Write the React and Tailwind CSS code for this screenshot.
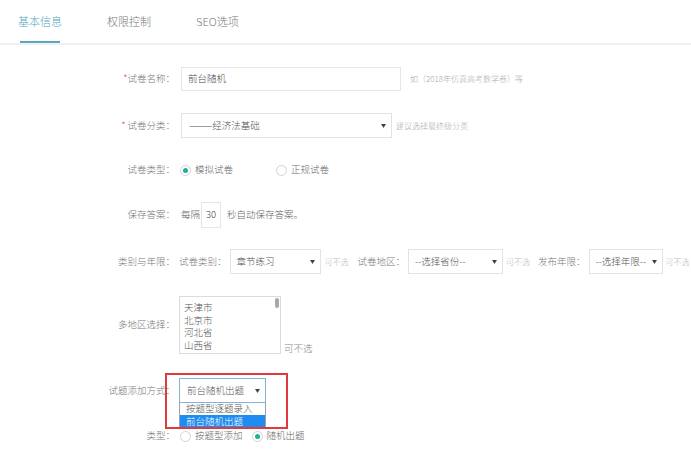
import React from "react";

const Arrow = () => (
  <svg width="5" height="4" viewBox="0 0 5 4" className="shrink-0">
    <path d="M0 0 L5 0 L2.5 4 Z" fill="#444" />
  </svg>
);

const Radio = ({ checked }) => (
  <span className="w-[11px] h-[11px] rounded-full border border-[#d3d3d3] bg-white flex items-center justify-center shrink-0">
    {checked && <span className="w-[5px] h-[5px] rounded-full bg-[#21b09b]" />}
  </span>
);

const Label = ({ children, star, space }) => (
  <div className="w-[175px] shrink-0 text-right text-[#777] pr-0">
    {star && <span className="text-[#e84c3d]">*</span>}
    {space && <span> </span>}
    {children}
  </div>
);

const Select = ({ w, text, className = "" }) => (
  <div
    className={`h-[25px] border border-[#e3e3e3] bg-white flex items-center justify-between pl-[6px] pr-[5px] text-[#555] ${className}`}
    style={{ width: w }}
  >
    <span className="whitespace-nowrap">{text}</span>
    <Arrow />
  </div>
);

export default function App() {
  return (
    <div
      className="w-[691px] h-[454px] bg-white overflow-hidden relative text-[9.5px] leading-none font-light"
      style={{ fontFamily: '"Noto Sans CJK SC", "Noto Sans", sans-serif' }}
    >
      {/* Tabs */}
      <div className="h-[45px] border-b-2 border-[#f1f1f1] flex items-start pl-[18px] text-[11px] text-[#777]">
        <div className="relative h-[43px] flex items-center w-[44px] justify-center text-[#4fa9bc]">
          基本信息
          <span className="absolute bottom-0 left-[2px] w-[40px] h-[2px] bg-[#56aabd]" />
        </div>
        <div className="h-[43px] flex items-center ml-[45px]">权限控制</div>
        <div className="h-[43px] flex items-center ml-[45px]">SEO选项</div>
      </div>

      {/* Row 1 */}
      <div className="mt-[22px] h-[24px] flex items-center">
        <Label star>试卷名称：</Label>
        <div className="ml-[6px] w-[220px] h-[24px] border border-[#e6e6e6] flex items-center pl-[6px] text-[#444]">
          前台随机
        </div>
        <span className="ml-[9px] text-[8px] text-[#aaa] whitespace-nowrap">如（2018年仿真高考数学卷）等</span>
      </div>

      {/* Row 2 */}
      <div className="mt-[22px] h-[25px] flex items-center">
        <Label star space>试卷分类：</Label>
        <Select w="211px" text="———经济法基础" className="ml-[6px] pl-[7px]" />
        <span className="ml-[4px] text-[8px] text-[#aaa] whitespace-nowrap">建议选择最终级分类</span>
      </div>

      {/* Row 3 */}
      <div className="mt-[22px] h-[20px] flex items-center">
        <Label>试卷类型：</Label>
        <div className="ml-[5px] flex items-center">
          <Radio checked />
          <span className="ml-[4px] text-[#666]">模拟试卷</span>
        </div>
        <div className="ml-[43px] flex items-center">
          <Radio />
          <span className="ml-[4px] text-[#666]">正规试卷</span>
        </div>
      </div>

      {/* Row 4 */}
      <div className="mt-[22px] h-[26px] flex items-center">
        <Label>保存答案：</Label>
        <span className="ml-[6px] text-[#666]">每隔</span>
        <div className="ml-[1px] w-[20px] h-[26px] border border-[#e6e6e6] flex items-center justify-center text-[#444]">30</div>
        <span className="ml-[6px] text-[#666]">秒自动保存答案。</span>
      </div>

      {/* Row 5 */}
      <div className="mt-[21px] h-[25px] flex items-center whitespace-nowrap">
        <Label>类别与年限：</Label>
        <span className="ml-[4px] text-[#777]">试卷类别：</span>
        <Select w="91px" text="章节练习" className="ml-[3px]" />
        <span className="ml-[4px] text-[8px] text-[#bbb]">可不选</span>
        <span className="ml-[9px] text-[#777]">试卷地区：</span>
        <Select w="95px" text="--选择省份--" className="ml-[3px]" />
        <span className="ml-[3px] text-[8px] text-[#bbb]">可不选</span>
        <span className="ml-[8px] text-[#777]">发布年限：</span>
        <Select w="74px" text="--选择年限--" className="ml-[3px]" />
        <span className="ml-[3px] text-[8px] text-[#bbb]">可不选</span>
      </div>

      {/* Row 6 */}
      <div className="mt-[22px] h-[58px] flex items-center">
        <Label>多地区选择：</Label>
        <div className="ml-[4px] w-[102px] h-[58px] border border-[#dcdcdc] relative overflow-hidden text-[#555]">
          <div className="pl-[4px] pt-[4px] flex flex-col leading-[12.7px]">
            <span>天津市</span>
            <span>北京市</span>
            <span>河北省</span>
            <span>山西省</span>
            <span>内蒙古自治区</span>
          </div>
          <span className="absolute right-[1px] top-[1px] w-[4px] h-[10px] rounded-full bg-[#a8a8a8]" />
        </div>
        <span className="self-end mb-[1px] ml-[3px] text-[#888]">可不选</span>
      </div>

      {/* Row 7 */}
      <div className="mt-[24px] h-[25px] flex items-center relative">
        <Label>试题添加方式：</Label>
        <div className="ml-[4px] relative">
          <div className="w-[87px] h-[25px] border border-[#7fb5d3] bg-white flex items-center justify-between pl-[7px] pr-[5px] text-[#555]">
            <span className="whitespace-nowrap">前台随机出题</span>
            <Arrow />
          </div>
          <div className="absolute left-0 top-[25px] w-[87px] border border-[#9aa3ab] border-t-0 bg-white z-10 text-[#555]">
            <div className="h-[12px] flex items-center pl-[6px] whitespace-nowrap">按题型逐题录入</div>
            <div className="h-[13px] flex items-center pl-[6px] whitespace-nowrap bg-[#1e8cf0] text-white">前台随机出题</div>
          </div>
        </div>
      </div>

      {/* Row 8 */}
      <div className="mt-[23px] h-[20px] flex items-center">
        <Label>类型：</Label>
        <div className="ml-[5px] flex items-center">
          <Radio />
          <span className="ml-[4px] text-[#666]">按题型添加</span>
        </div>
        <div className="ml-[9px] flex items-center">
          <Radio checked />
          <span className="ml-[4px] text-[#666]">随机出题</span>
        </div>
      </div>

      {/* Red annotation box */}
      <div className="absolute left-[165px] top-[373px] w-[123px] h-[56px] border-2 border-[#e0393e] z-20 pointer-events-none" />
    </div>
  );
}
